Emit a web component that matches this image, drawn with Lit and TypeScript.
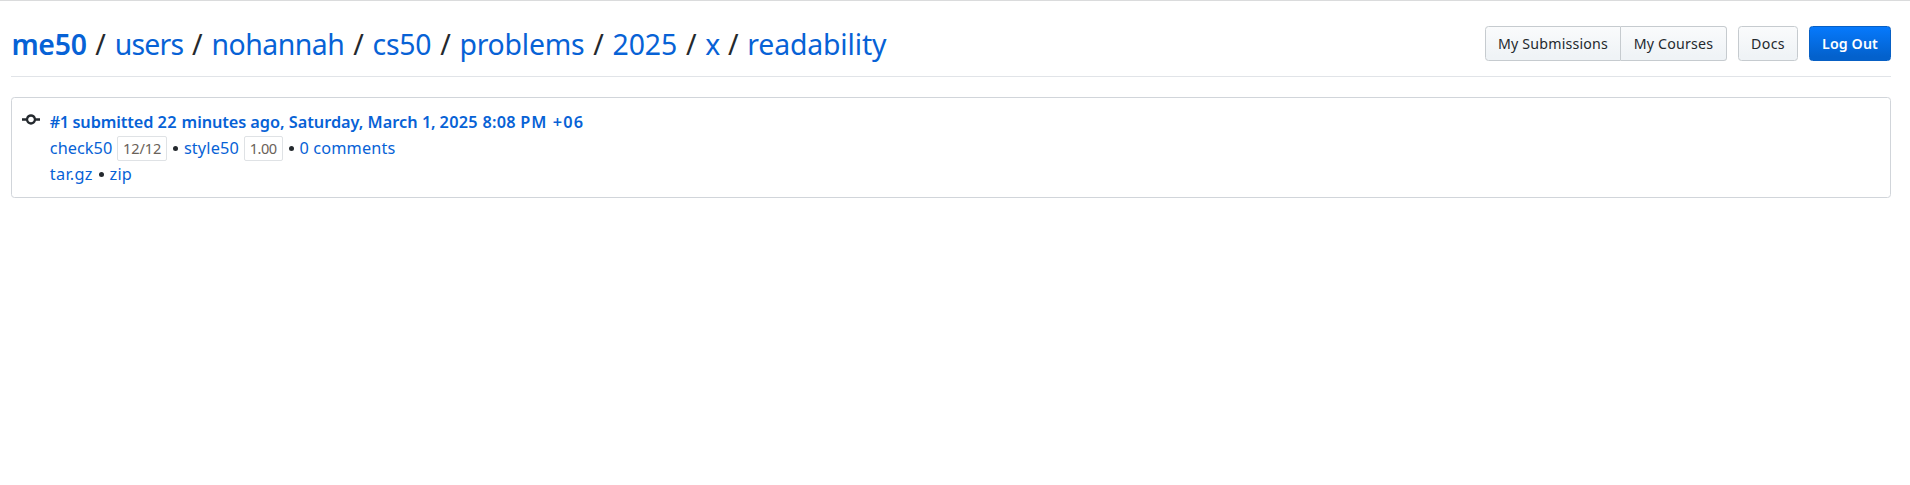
import { LitElement, html, css, nothing } from "lit";
import { customElement, property } from "lit/decorators.js";

/** Inline text whose tracking is adjusted so that it fills a given width. */
@customElement("fitted-text")
class FittedText extends LitElement {
  @property({ type: Number }) width = 0;
  @property() text = "";

  static styles = css`
    :host { display: inline-block; white-space: pre; }
    .text { display: inline-block; }
  `;

  updated() {
    const span = this.renderRoot.querySelector(".text") as HTMLElement;
    span.style.letterSpacing = "0";
    const natural = span.getBoundingClientRect().width;
    span.style.letterSpacing = `${(this.width - natural) / this.text.length}px`;
  }

  render() {
    return html`<span class="text">${this.text}</span>`;
  }
}

const fit = (text: string, width: number) =>
  html`<fitted-text text=${text} width=${width}></fitted-text>`;

const crumbs: [string, number][] = [
  ["me50", 75.2],
  ["users", 68.6],
  ["nohannah", 133],
  ["cs50", 58.9],
  ["problems", 124.9],
  ["2025", 64.8],
  ["x", 13.9],
  ["readability", 139],
];

const title: [string, number][] = [
  ["#1", 18.5],
  [" submitted ", 89.2],
  ["22 ", 24.1],
  ["minutes ", 68.7],
  ["ago, ", 38.5],
  ["Saturday, ", 78.8],
  ["March ", 54.4],
  ["1,", 13],
  [" 2025 ", 47.5],
  ["8:08 ", 37.8],
  ["PM ", 32.5],
  ["+06", 31.5],
];

@customElement("app-root")
class AppRoot extends LitElement {
  static styles = css`
    :host {
      display: block;
      box-sizing: border-box;
      height: 485px;
      padding: 25px 19px 0 11px;
      border-top: 1px solid #dadbdc;
      background: #fff;
      color: #24292e;
      font-family: "Noto Sans", "Open Sans", sans-serif;
      font-size: 16.3px;
      line-height: 26px;
    }
    a { color: #0762d6; text-decoration: none; }
    .header {
      display: flex;
      justify-content: space-between;
      height: 50px;
      border-bottom: 1px solid #e1e4e8;
    }
    .crumbs {
      display: flex;
      height: 36px;
      padding-left: 0.4px;
      font-size: 28.4px;
      line-height: 36px;
      white-space: nowrap;
    }
    .crumbs .first { font-weight: 600; }
    .slash { width: 28.1px; text-align: center; }
    .actions { display: flex; gap: 11px; height: 35px; }
    .group { display: flex; }
    .btn {
      box-sizing: border-box;
      display: flex;
      justify-content: center;
      height: 35px;
      border: 1px solid #c6cbcf;
      border-radius: 3.5px;
      background: linear-gradient(#fafbfc, #eff3f6 90%);
      color: #24292e;
      font-size: 14.2px;
      line-height: 34px;
    }
    .subs { width: 136px; border-radius: 3.5px 0 0 3.5px; }
    .courses { width: 106px; border-left: 0; border-radius: 0 3.5px 3.5px 0; }
    .docs { width: 60px; }
    .logout {
      width: 82px;
      border-color: #0860c4;
      background: linear-gradient(#0679fc, #0361cc 90%);
      color: #fff;
      font-weight: 600;
    }
    .card {
      box-sizing: border-box;
      display: flex;
      height: 101px;
      margin-top: 20px;
      padding: 11px 10px;
      border: 1px solid #d1d5da;
      border-radius: 3.5px;
    }
    .commit { flex: none; width: 18px; height: 21px; margin-right: 9.8px; fill: #24292e; }
    .row { display: flex; height: 26px; line-height: 26px; white-space: nowrap; }
    .title { font-weight: 600; }
    .badge {
      box-sizing: border-box;
      display: flex;
      justify-content: center;
      height: 25px;
      margin: 1px 0 0 4.8px;
      border: 1px solid #dfe2e5;
      border-radius: 2px;
      color: #6a6259;
      font-size: 14.6px;
      line-height: 22px;
    }
    .score { width: 50px; }
    .style { width: 39px; }
    .dot { width: 16.8px; text-align: center; }
    .dot::before {
      content: "";
      display: inline-block;
      width: 5px;
      height: 5px;
      border-radius: 50%;
      background: #24292e;
      vertical-align: 3px;
    }
  `;

  render() {
    return html`
      <div class="header">
        <div class="crumbs">
          ${crumbs.map(
            ([name, width], i) => html`
              ${i ? html`<span class="slash">/</span>` : nothing}
              <a class=${i ? "crumb" : "first"}>${fit(name, width)}</a>
            `,
          )}
        </div>
        <div class="actions">
          <div class="group">
            <a class="btn subs">${fit("My Submissions", 110.2)}</a>
            <a class="btn courses">${fit("My Courses", 79.5)}</a>
          </div>
          <a class="btn docs">${fit("Docs", 34)}</a>
          <a class="btn logout">${fit("Log Out", 56)}</a>
        </div>
      </div>
      <div class="card">
        <svg class="commit" viewBox="0 0 14 16">
          <path d="M10.86 7c-.45-1.72-2-3-3.86-3-1.86 0-3.41 1.28-3.86 3H0v2h3.14c.45 1.72 2 3 3.86 3 1.86 0 3.41-1.28 3.86-3H14V7h-3.14zM7 10.2c-1.22 0-2.2-.98-2.2-2.2 0-1.22.98-2.2 2.2-2.2 1.22 0 2.2.98 2.2 2.2 0 1.22-.98 2.2-2.2 2.2z"></path>
        </svg>
        <div>
          <div class="row title">
            <a>${title.map(([word, width]) => fit(word, width))}</a>
          </div>
          <div class="row">
            <a>${fit("check50", 62.5)}</a>
            <span class="badge score">${fit("12/12", 38)}</span>
            <span class="dot"></span>
            <a>${fit("style50", 55)}</a>
            <span class="badge style">${fit("1.00", 27)}</span>
            <span class="dot"></span>
            <a>${fit("0 comments", 96)}</a>
          </div>
          <div class="row">
            <a>${fit("tar.gz", 43)}</a>
            <span class="dot"></span>
            <a>${fit("zip", 22.5)}</a>
          </div>
        </div>
      </div>
    `;
  }
}
